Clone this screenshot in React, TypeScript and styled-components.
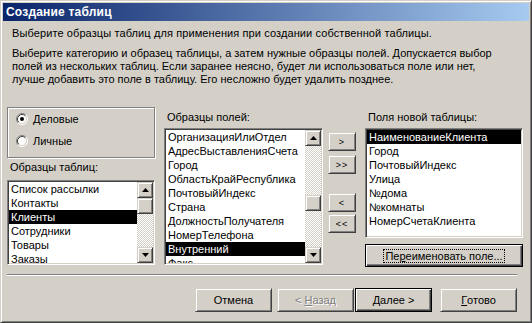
import React from "react";
import styled, { createGlobalStyle, css } from "styled-components";

const Global = createGlobalStyle`
  html, body { margin: 0; padding: 0; background: #D4D0C8; }
  body { font-family: "Liberation Sans", Arial, sans-serif; font-size: 11px; color: #000; }
`;

const FACE = "#D4D0C8";

const raised = css`
  border: 1px solid;
  border-color: ${FACE} #404040 #404040 ${FACE};
  box-shadow: inset 1px 1px #fff, inset -1px -1px #808080;
`;

const Window = styled.div`
  box-sizing: border-box;
  width: 532px;
  height: 323px;
  background: ${FACE};
  ${raised};
  padding: 2px;
  display: flex;
  flex-direction: column;
`;

const TitleBar = styled.div`
  height: 18px;
  flex-shrink: 0;
  display: flex;
  align-items: center;
  padding-left: 3px;
  background: linear-gradient(to right, #0a246a, #a6caf0);
  color: #fff;
  font-weight: bold;
  font-size: 12px;
  letter-spacing: 0.2px;
`;

const Body = styled.div`
  flex: 1;
  display: flex;
  flex-direction: column;
`;

const Intro = styled.div`
  margin: 6px 0 0 9px;
  line-height: 13px;
  white-space: nowrap;
  letter-spacing: 0.1px;
`;

const Para = styled.div`
  margin: 7px 0 0 9px;
  line-height: 13px;
  white-space: nowrap;
`;

const Main = styled.div`
  margin-top: 21px;
  padding-left: 4px;
  height: 160px;
  display: flex;
  align-items: flex-start;
`;

const Column = styled.div<{ $w: number; $ml?: number }>`
  width: ${(p) => p.$w}px;
  margin-left: ${(p) => p.$ml ?? 0}px;
  display: flex;
  flex-direction: column;
`;

const GroupBox = styled.div`
  box-sizing: border-box;
  height: 51px;
  border: 1px solid #808080;
  box-shadow: inset 1px 1px #fff, 1px 1px #fff;
  padding: 4px 0 0 8px;
  display: flex;
  flex-direction: column;
  gap: 8px;
`;

const RadioRow = styled.label`
  height: 14px;
  display: flex;
  align-items: center;
  gap: 5px;
`;

const Label = styled.div<{ $mt: number }>`
  margin-top: ${(p) => p.$mt}px;
  line-height: 13px;
  height: 13px;
  padding-left: 3px;
  white-space: nowrap;
`;

const ListBox = styled.div<{ $h: number; $mt: number }>`
  box-sizing: border-box;
  height: ${(p) => p.$h}px;
  margin-top: ${(p) => p.$mt}px;
  background: #fff;
  border: 1px solid;
  border-color: #808080 #fff #fff #808080;
  box-shadow: inset 1px 1px #404040, inset -1px -1px ${FACE};
  padding: 1px;
  display: flex;
  overflow: hidden;
`;

const Items = styled.div`
  flex: 1;
  min-width: 0;
  overflow: hidden;
  display: flex;
  flex-direction: column;
`;

const Item = styled.div<{ $sel?: boolean }>`
  flex-shrink: 0;
  height: 14px;
  line-height: 14px;
  padding-left: 2px;
  white-space: nowrap;
  background: ${(p) => (p.$sel ? "#000" : "transparent")};
  color: ${(p) => (p.$sel ? "#fff" : "#000")};
`;

const ScrollBar = styled.div`
  width: 16px;
  flex-shrink: 0;
  display: flex;
  flex-direction: column;
  background-color: #fff;
  background-image: conic-gradient(#fff 25%, ${FACE} 0 50%, #fff 0 75%, ${FACE} 0);
  background-size: 2px 2px;
`;

const ScrollBtn = styled.div`
  box-sizing: border-box;
  width: 16px;
  height: 16px;
  flex-shrink: 0;
  background: ${FACE};
  ${raised};
  display: flex;
  align-items: center;
  justify-content: center;
`;

const Thumb = styled.div<{ $top: number }>`
  box-sizing: border-box;
  width: 16px;
  height: 16px;
  margin-top: ${(p) => p.$top}px;
  background: ${FACE};
  ${raised};
`;

const Spacer = styled.div`
  flex: 1;
`;

const Button = styled.button<{ $w: number; $h: number; $ml?: number; $mt?: number; $default?: boolean }>`
  box-sizing: border-box;
  width: ${(p) => p.$w}px;
  height: ${(p) => p.$h}px;
  margin: ${(p) => p.$mt ?? 0}px 0 0 ${(p) => p.$ml ?? 0}px;
  padding: 0;
  font-family: "Liberation Sans", Arial, sans-serif;
  font-size: 11px;
  color: #000;
  background: ${FACE};
  display: flex;
  align-items: center;
  justify-content: center;
  ${(p) =>
    p.$default
      ? css`
          border: 1px solid #000;
          box-shadow: inset 1px 1px #fff, inset -1px -1px #404040, inset -2px -2px #808080;
        `
      : raised}
  &:disabled {
    color: #808080;
    text-shadow: 1px 1px #fff;
  }
`;

const SmallButton = styled(Button)`
  font-size: 9px;
  letter-spacing: 1px;
`;

const Focus = styled.span`
  outline: 1px dotted #000;
  padding: 0 1px;
  line-height: 12px;
`;

const Key = styled.u`
  text-decoration: underline;
`;

const Separator = styled.div`
  margin: 7px 12px 0 4px;
  height: 0;
  border-top: 1px solid #808080;
  border-bottom: 1px solid #fff;
`;

const Footer = styled.div`
  margin-top: 12px;
  padding-right: 12px;
  display: flex;
  justify-content: flex-end;
`;

function Radio({ checked }: { checked?: boolean }) {
  return (
    <svg width="12" height="12" viewBox="0 0 12 12">
      <circle cx="6" cy="6" r="5" fill="#fff" />
      <path d="M2.11 9.89 A5.5 5.5 0 0 1 9.89 2.11" fill="none" stroke="#808080" />
      <path d="M9.89 2.11 A5.5 5.5 0 0 1 2.11 9.89" fill="none" stroke="#fff" />
      <path d="M2.82 9.18 A4.5 4.5 0 0 1 9.18 2.82" fill="none" stroke="#404040" />
      <path d="M9.18 2.82 A4.5 4.5 0 0 1 2.82 9.18" fill="none" stroke={FACE} />
      {checked && <circle cx="6" cy="6" r="2" fill="#000" />}
    </svg>
  );
}

function Arrow({ up }: { up?: boolean }) {
  return (
    <svg width="7" height="4" viewBox="0 0 7 4">
      <polygon points={up ? "3.5,0 7,4 0,4" : "0,0 7,0 3.5,4"} fill="#000" />
    </svg>
  );
}

function List({ items, sel, h, mt, thumb }: { items: string[]; sel: number; h: number; mt: number; thumb?: number }) {
  return (
    <ListBox $h={h} $mt={mt}>
      <Items>
        {items.map((t, i) => (
          <Item key={i} $sel={i === sel}>
            {t}
          </Item>
        ))}
      </Items>
      {thumb !== undefined && (
        <ScrollBar>
          <ScrollBtn>
            <Arrow up />
          </ScrollBtn>
          <Thumb $top={thumb} />
          <Spacer />
          <ScrollBtn>
            <Arrow />
          </ScrollBtn>
        </ScrollBar>
      )}
    </ListBox>
  );
}

const tables = ["Список рассылки", "Контакты", "Клиенты", "Сотрудники", "Товары", "Заказы"];
const fields = [
  "ОрганизацияИлиОтдел",
  "АдресВыставленияСчета",
  "Город",
  "ОбластьКрайРеспублика",
  "ПочтовыйИндекс",
  "Страна",
  "ДолжностьПолучателя",
  "НомерТелефона",
  "Внутренний",
  "Факс",
];
const newFields = ["НаименованиеКлиента", "Город", "ПочтовыйИндекс", "Улица", "№дома", "№комнаты", "НомерСчетаКлиента"];

export default function App() {
  return (
    <>
      <Global />
      <Window>
        <TitleBar>Создание таблиц</TitleBar>
        <Body>
          <Intro>Выберите образцы таблиц для применения при создании собственной таблицы.</Intro>
          <Para>
            Выберите категорию и образец таблицы, а затем нужные образцы полей. Допускается выбор
            <br />
            полей из нескольких таблиц. Если заранее неясно, будет ли использоваться поле или нет,
            <br />
            лучше добавить это поле в таблицу. Его несложно будет удалить позднее.
          </Para>
          <Main>
            <Column $w={148}>
              <GroupBox>
                <RadioRow>
                  <Radio checked />
                  Деловые
                </RadioRow>
                <RadioRow>
                  <Radio />
                  Личные
                </RadioRow>
              </GroupBox>
              <Label $mt={3}>Образцы таблиц:</Label>
              <List items={tables} sel={2} h={85} mt={6} thumb={0} />
            </Column>
            <Column $w={159} $ml={9}>
              <Label $mt={4}>Образцы полей:</Label>
              <List items={fields} sel={8} h={137} mt={4} thumb={49} />
            </Column>
            <Column $w={28} $ml={5}>
              <SmallButton $w={28} $h={19} $mt={25}>&gt;</SmallButton>
              <SmallButton $w={28} $h={19} $mt={4}>&gt;&gt;</SmallButton>
              <SmallButton $w={28} $h={19} $mt={19}>&lt;</SmallButton>
              <SmallButton $w={28} $h={19} $mt={2}>&lt;&lt;</SmallButton>
            </Column>
            <Column $w={158} $ml={9}>
              <Label $mt={4}>Поля новой таблицы:</Label>
              <List items={newFields} sel={0} h={110} mt={4} />
              <Button $w={158} $h={23} $mt={6} $default>
                <Focus>
                  Пе<Key>р</Key>еименовать поле...
                </Focus>
              </Button>
            </Column>
          </Main>
          <Separator />
          <Footer>
            <Button $w={77} $h={24}>Отмена</Button>
            <Button $w={77} $h={24} $ml={5} disabled>
              &lt;&nbsp;<Key>Н</Key>азад
            </Button>
            <Button $w={77} $h={24} $ml={1} $default>
              <Key>Д</Key>алее &gt;
            </Button>
            <Button $w={77} $h={24} $ml={8}>
              <Key>Г</Key>отово
            </Button>
          </Footer>
        </Body>
      </Window>
    </>
  );
}
